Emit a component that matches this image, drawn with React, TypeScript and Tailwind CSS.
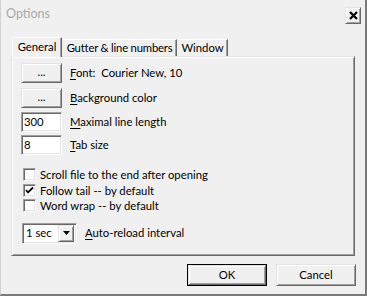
import React from 'react'

const raised =
  'border border-t-[#e3e3e3] border-l-[#e3e3e3] border-b-[#696969] border-r-[#696969] shadow-[inset_1px_1px_0_#ffffff,inset_-1px_-1px_0_#a0a0a0] bg-[#f0f0f0]'
const sunken =
  'border border-t-[#a0a0a0] border-l-[#a0a0a0] border-b-[#ffffff] border-r-[#ffffff] shadow-[inset_1px_1px_0_#696969,inset_-1px_-1px_0_#e3e3e3] bg-white'

function U({ children }: { children: React.ReactNode }) {
  return <span className="underline underline-offset-2">{children}</span>
}

function Check({ checked, label }: { checked?: boolean; label: string }) {
  return (
    <div className="flex items-center h-[15.5px] pl-[2px]">
      <div className={`w-[13px] h-[13px] ${sunken} flex items-center justify-center`}>
        {checked && (
          <svg width="9" height="9" viewBox="0 0 9 9">
            <path d="M1 4 L3 6.5 L8 1.5" stroke="#000" strokeWidth="1.8" fill="none" />
          </svg>
        )}
      </div>
      <span className="ml-[4px]">{label}</span>
    </div>
  )
}

export default function App() {
  return (
    <div
      className="w-[367px] h-[296px] bg-[#f0f0f0] border-l border-l-[#d0d0d0] border-r-2 border-b-2 border-r-[#7a7a7a] border-b-[#7a7a7a] text-[11.3px] text-black leading-none flex flex-col"
      style={{ fontFamily: 'Lato, "Noto Sans", sans-serif' }}
    >
      {/* title bar */}
      <div className="h-[36px] flex items-start justify-between pl-[5px] pr-[4px]">
        <span className="mt-[8px] text-[12.5px] text-[#a8a8a8]">Options</span>
        <div className={`mt-[7px] w-[16px] h-[17px] ${raised} flex items-center justify-center`}>
          <svg width="9" height="9" viewBox="0 0 9 9">
            <path d="M1 1 L8 8 M8 1 L1 8" stroke="#000" strokeWidth="2.2" />
          </svg>
        </div>
      </div>

      {/* tabs */}
      <div className="flex items-end h-[20px] pl-[11px] relative z-10">
        <div className="w-[50px] h-[20px] flex items-center justify-center bg-[#f0f0f0] border-t border-l border-r border-t-white border-l-white border-r-[#696969] shadow-[inset_-1px_0_0_#a0a0a0] -mb-px pb-[2px]">
          General
        </div>
        <div className="w-[114px] h-[17px] ml-px flex items-center justify-center tracking-[-0.2px] border-t border-r border-t-white border-r-[#696969] shadow-[inset_-1px_0_0_#a0a0a0]">
          Gutter &amp; line numbers
        </div>
        <div className="w-[50px] h-[17px] ml-px flex items-center justify-center border-t border-r border-t-white border-r-[#696969] shadow-[inset_-1px_0_0_#a0a0a0]">
          Window
        </div>
      </div>

      {/* panel */}
      <div className={`mx-[10px] h-[200px] ${raised} flex flex-col pl-[9px]`}>
        <div className="flex items-center h-[20px] mt-[6px]">
          <div className={`w-[41px] h-[20px] ${raised} flex items-center justify-center pb-[3px]`}>...</div>
          <span className="ml-[8px]">
            <U>F</U>ont:&nbsp; Courier New, 10
          </span>
        </div>
        <div className="flex items-center h-[20px] mt-[5px]">
          <div className={`w-[41px] h-[20px] ${raised} flex items-center justify-center pb-[3px]`}>...</div>
          <span className="ml-[8px]">
            <U>B</U>ackground color
          </span>
        </div>
        <div className="flex items-center h-[20px] mt-[4px]">
          <div className={`w-[41px] h-[20px] ${sunken} flex items-center pl-[2px]`}>300</div>
          <span className="ml-[8px]">
            <U>M</U>aximal line length
          </span>
        </div>
        <div className="flex items-center h-[20px] mt-[3px]">
          <div className={`w-[41px] h-[20px] ${sunken} flex items-center pl-[2px]`}>8</div>
          <span className="ml-[8px]">
            <U>T</U>ab size
          </span>
        </div>
        <div className="mt-[12px] flex flex-col">
          <Check label="Scroll file to the end after opening" />
          <Check checked label="Follow tail -- by default" />
          <Check label="Word wrap -- by default" />
        </div>
        <div className="flex items-center h-[21px] mt-[9px] pl-px">
          <div className={`w-[55px] h-[21px] ${sunken} flex items-center justify-between pl-[3px] pr-[2px]`}>
            <span>1 sec</span>
            <div className={`w-[16px] h-[17px] ${raised} flex items-center justify-center`}>
              <svg width="7" height="4" viewBox="0 0 7 4">
                <path d="M0 0 H7 L3.5 4 Z" fill="#000" />
              </svg>
            </div>
          </div>
          <span className="ml-[8px]">
            <U>A</U>uto-reload interval
          </span>
        </div>
      </div>

      {/* buttons */}
      <div className="flex justify-end gap-[9px] mt-[8px] pr-[9px]">
        <div className="w-[80px] h-[22px] border border-black">
          <div className={`w-full h-full ${raised} flex items-center justify-center`}>OK</div>
        </div>
        <div className={`w-[80px] h-[22px] ${raised} flex items-center justify-center`}>Cancel</div>
      </div>
    </div>
  )
}
